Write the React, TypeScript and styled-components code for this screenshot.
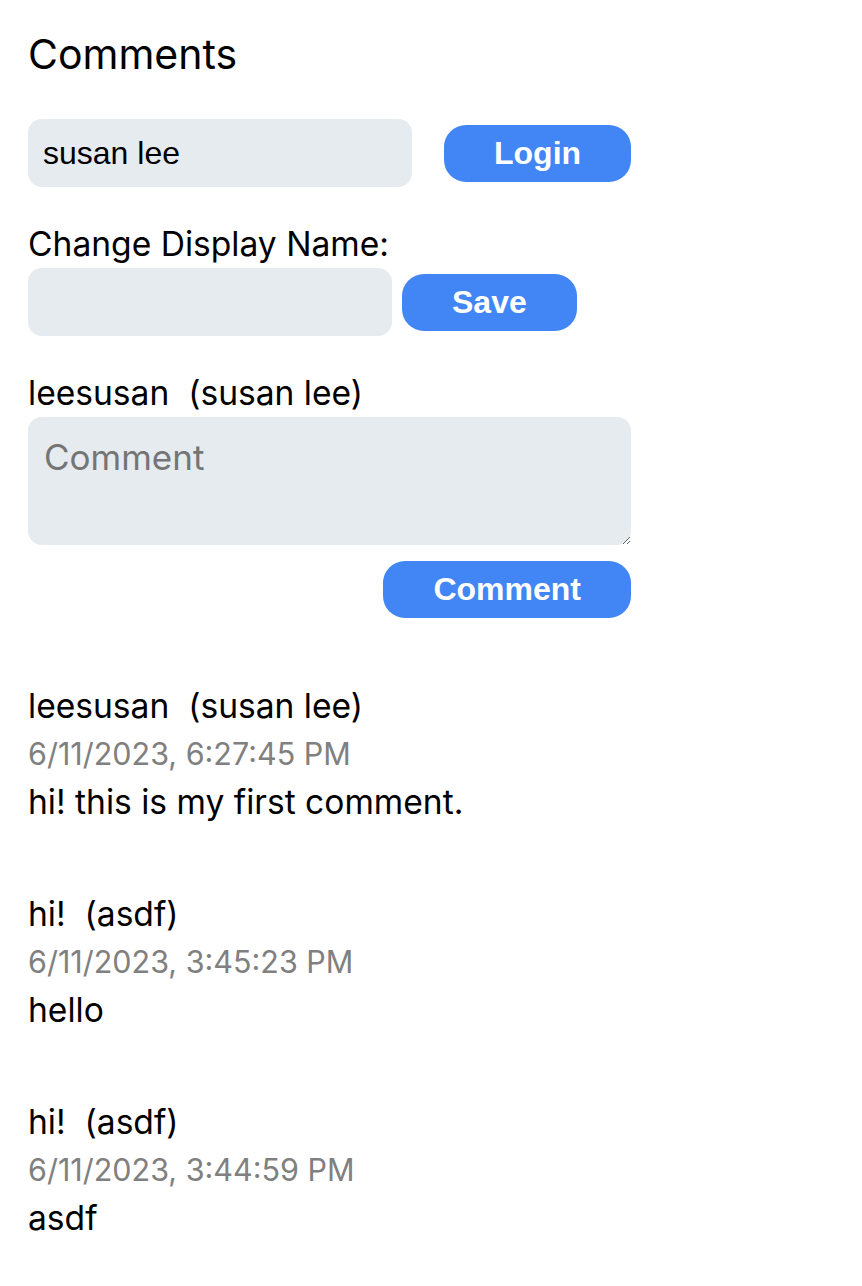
import * as React from 'react';
import styled, { createGlobalStyle } from 'styled-components';

const GlobalStyle = createGlobalStyle`
  html, body {
    margin: 0;
    background: #fff;
  }

  body {
    font-family: Inter, "Open Sans", sans-serif;
    color: #000;
  }
`;

const Page = styled.main`
  width: 603px;
  padding: 24px 28px 40px;
`;

const Title = styled.h2`
  margin: 0 0 35px;
  font-size: 41px;
  font-weight: 400;
  line-height: 60px;
`;

const Form = styled.section`
  display: flex;
  flex-direction: column;
`;

const Row = styled.div<{ $gap: number }>`
  display: flex;
  align-items: center;
  gap: ${p => p.$gap}px;
`;

const TextInput = styled.input<{ $width: number }>`
  box-sizing: border-box;
  width: ${p => p.$width}px;
  height: 68px;
  padding: 0 15px;
  border: 0;
  border-radius: 14px;
  background: #e6ebf0;
  color: #000;
  font-family: "Liberation Sans", Arial, sans-serif;
  font-size: 32px;
  outline: none;
`;

const Button = styled.button`
  box-sizing: border-box;
  height: 57px;
  padding: 0 50px;
  border: 0;
  border-radius: 22px;
  background: #4285f4;
  color: #fff;
  font-family: "Liberation Sans", Arial, sans-serif;
  font-size: 32px;
  font-weight: 700;
  cursor: pointer;
`;

const Line = styled.div<{ $top?: number }>`
  margin-top: ${p => p.$top ?? 0}px;
  font-size: 33.6px;
  line-height: 48px;
  white-space: pre;
`;

const DateLine = styled.div`
  color: #808080;
  font-size: 30.5px;
  line-height: 48px;
`;

const CommentBox = styled.textarea`
  box-sizing: border-box;
  width: 603px;
  height: 128px;
  padding: 16px;
  border: 0;
  border-radius: 14px;
  background: #e6ebf0;
  font-family: inherit;
  font-size: 35px;
  line-height: 48px;
  outline: none;

  &::placeholder {
    color: #757575;
  }
`;

const SubmitButton = styled(Button)`
  align-self: flex-end;
  margin-top: 16px;
`;

const List = styled.section`
  display: flex;
  flex-direction: column;
  gap: 64px;
  margin-top: 64px;
`;

const comments = [
  { user: 'leesusan', name: 'susan lee', date: '6/11/2023, 6:27:45 PM', text: 'hi! this is my first comment.' },
  { user: 'hi!', name: 'asdf', date: '6/11/2023, 3:45:23 PM', text: 'hello' },
  { user: 'hi!', name: 'asdf', date: '6/11/2023, 3:44:59 PM', text: 'asdf' },
];

export default function App() {
  return (
    <Page>
      <GlobalStyle />
      <Title>Comments</Title>
      <Form>
        <Row $gap={32}>
          <TextInput $width={384} defaultValue="susan lee" />
          <Button type="button">Login</Button>
        </Row>
        <Line $top={33}>Change Display Name:</Line>
        <Row $gap={10}>
          <TextInput $width={364} />
          <Button type="button">Save</Button>
        </Row>
        <Line $top={33}>{'leesusan  (susan lee)'}</Line>
        <CommentBox placeholder="Comment" />
        <SubmitButton type="button">Comment</SubmitButton>
      </Form>
      <List>
        {comments.map(c => (
          <article key={c.date}>
            <Line>{`${c.user}  (${c.name})`}</Line>
            <DateLine>{c.date}</DateLine>
            <Line>{c.text}</Line>
          </article>
        ))}
      </List>
    </Page>
  );
}
